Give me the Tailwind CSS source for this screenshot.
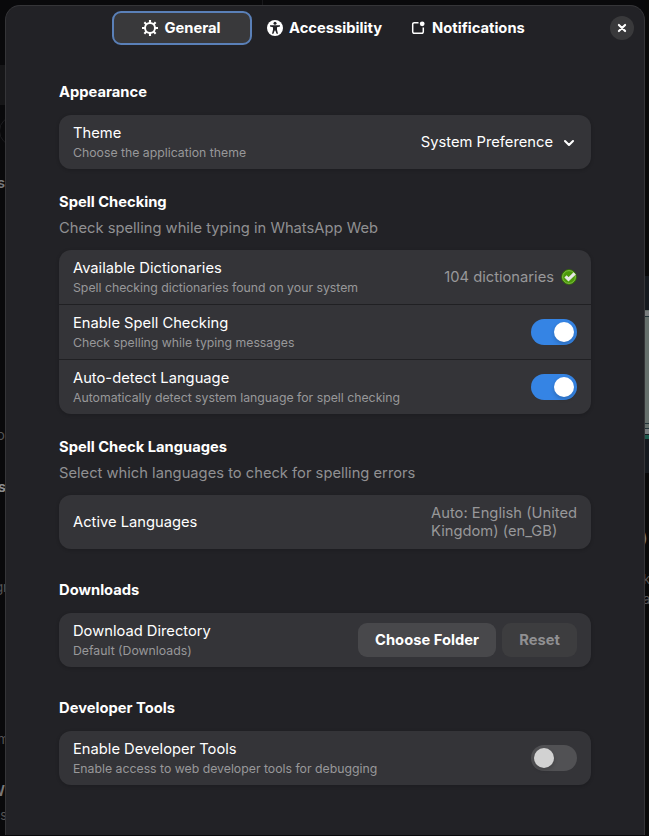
<!DOCTYPE html>
<html lang="en">
<head>
<meta charset="utf-8">
<title>Preferences</title>
<script src="https://cdn.jsdelivr.net/npm/@tailwindcss/browser@4"></script>
</head>
<body class="relative h-[836px] w-[649px] overflow-hidden bg-[#09090b] font-['Inter',sans-serif] text-[14.72px] leading-[18px] text-white antialiased">
<!-- dimmed window behind the dialog -->
<div class="absolute inset-0 overflow-hidden text-[#555557]" aria-hidden="true">
  <div class="absolute left-0 top-[65px] h-10 w-[6px] bg-[#161618]"></div>
  <div class="absolute left-[-1px] top-[116px] h-[30px] w-[30px] rounded-full border border-[#1c1c1f]"></div>
  <div class="absolute left-[262px] top-0 h-[5px] w-px bg-[#18181b]"></div>
  <div class="absolute right-[644px] top-[174px] font-semibold text-[#79797b]">s</div>
  <div class="absolute right-[644px] top-[426px] text-[14px]">o</div>
  <div class="absolute right-[643px] top-[478px] font-bold text-[#8a8a8c]">s</div>
  <div class="absolute right-[641px] top-[578px] text-[13px]">gr</div>
  <div class="absolute right-[640px] top-[730px] text-[13px]">m</div>
  <div class="absolute right-[644px] top-[782px] font-semibold text-[#79797b]">W</div>
  <div class="absolute right-[642px] top-[806px] text-[13px]">es</div>
  <div class="absolute left-[645px] top-0 h-[836px] w-1 bg-[#090909]"></div>
  <div class="absolute left-[645px] top-[276px] h-[197px] w-1 bg-[#15191e]"></div>
  <div class="absolute left-[645px] top-[310px] h-[124px] w-1 bg-[#66706c]"></div>
  <div class="absolute left-[645px] top-[311px] h-[5px] w-1 bg-[#7a7e7f]"></div>
  <div class="absolute left-[645px] top-[316px] h-px w-1 bg-[#223338]"></div>
  <div class="absolute left-[645px] top-[423px] h-px w-1 bg-[#223338]"></div>
  <div class="absolute left-[645px] top-[428px] h-px w-1 bg-[#223338]"></div>
  <div class="absolute left-[645px] top-[429px] h-[5px] w-1 bg-[#7a7e7f]"></div>
  <div class="absolute left-[645px] top-[435px] h-[4px] w-1 bg-[#1d5c4e]"></div>
  <div class="absolute left-[642px] top-[529px] font-semibold text-[#79797b]">)</div>
  <div class="absolute left-[643px] top-[570px] text-[13px]">ke</div>
  <div class="absolute left-[643px] top-[590px] text-[13px]">ar</div>
</div>

<main class="relative ml-[5px] mt-[5px] flow-root h-[830px] w-[640px] rounded-t-[15px] border border-b-0 border-[#353538] bg-[#222226]">
  <header class="flex h-[44px] items-center pl-[106px] pr-[10px] font-bold">
    <button class="-mt-px flex h-[34px] w-[140px] items-center justify-center gap-[6px] rounded-[9px] border-2 border-[#5a80b8] bg-[#39393b] pr-px">
      <svg class="h-4 w-4" viewBox="0 0 16 16" fill="none" stroke="white"><circle cx="8" cy="8" r="5" stroke-width="2"/><g stroke-width="2.1"><path d="M8 0v3M8 13v3M0 8h3M13 8h3M2.35 2.35l2.1 2.1M11.55 11.55l2.1 2.1M2.35 13.65l2.1-2.1M11.55 4.45l2.1-2.1"/></g></svg>
      <span>General</span>
    </button>
    <button class="ml-[15px] flex items-center gap-[6px]">
      <svg class="h-4 w-4" viewBox="0 0 16 16"><circle cx="8" cy="8" r="8" fill="white"/><circle cx="8" cy="3.3" r="1.5" fill="#222226"/><path d="M3 5.2h10v1.3l-3 .8v2.5l1 4h-1.4L8.3 10.5h-.6L6.4 13.8H5l1-4V7.3l-3-.8z" fill="#222226"/></svg>
      <span>Accessibility</span>
    </button>
    <button class="ml-[28px] flex items-center gap-[6px]">
      <svg class="h-4 w-4" viewBox="0 0 16 16"><path d="M8.5 2.7H4.2A1.5 1.5 0 0 0 2.7 4.2v7.6a1.5 1.5 0 0 0 1.5 1.5h7.6a1.5 1.5 0 0 0 1.5-1.5V7.5" fill="none" stroke="white" stroke-width="1.5"/><circle cx="12.2" cy="3.8" r="2.4" fill="white"/></svg>
      <span>Notifications</span>
    </button>
    <button class="ml-auto flex h-6 w-6 items-center justify-center rounded-full bg-[#39393b]" aria-label="Close">
      <svg class="h-4 w-4" viewBox="0 0 16 16"><path d="M4.9 4.9l6.2 6.2M11.1 4.9l-6.2 6.2" stroke="white" stroke-width="2.1" stroke-linecap="round"/></svg>
    </button>
  </header>

  <div class="mx-[53px] pt-[33px]">
    <section>
      <h2 class="font-bold">Appearance</h2>
      <div class="mt-[14px] flex h-[54px] items-center justify-between rounded-xl bg-[#343438] px-[14px] shadow-[0_1px_3px_1px_#0000001f]">
        <div><p>Theme</p><p class="mt-[3px] text-[12.27px] leading-[16px] text-[#98989a]">Choose the application theme</p></div>
        <div class="flex items-center gap-[8px]"><span>System Preference</span>
          <svg class="h-4 w-4" viewBox="0 0 16 16"><path d="M4 7l4 4 4-4" fill="none" stroke="white" stroke-width="2.1" stroke-linecap="round" stroke-linejoin="round"/></svg></div>
      </div>
    </section>

    <section class="mt-[24px]">
      <h2 class="font-bold">Spell Checking</h2>
      <p class="mt-[8px] text-[#909092]">Check spelling while typing in WhatsApp Web</p>
      <div class="mt-[13px] divide-y divide-[#202023] rounded-xl bg-[#343438] shadow-[0_1px_3px_1px_#0000001f]">
        <div class="flex h-[55px] items-center justify-between px-[14px]">
          <div><p>Available Dictionaries</p><p class="mt-[3px] text-[12.27px] leading-[16px] text-[#98989a]">Spell checking dictionaries found on your system</p></div>
          <div class="flex items-center gap-[7px] text-[#98989a]"><span>104 dictionaries</span>
            <svg class="h-4 w-4" viewBox="0 0 16 16"><circle cx="8" cy="8" r="7.3" fill="#4c9a0b" stroke="#387405"/><circle cx="8" cy="8" r="6.4" fill="none" stroke="#8cc653" stroke-width=".8"/><path d="M4.5 7.3l3 3 6.2-6" fill="none" stroke="#e6e6e6" stroke-width="3.2"/></svg></div>
        </div>
        <div class="flex h-[55px] items-center justify-between px-[14px]">
          <div><p>Enable Spell Checking</p><p class="mt-[3px] text-[12.27px] leading-[16px] text-[#98989a]">Check spelling while typing messages</p></div>
          <div class="flex h-[26px] w-[46px] justify-end rounded-full bg-[#3584e4] p-[3px]"><span class="h-5 w-5 rounded-full bg-white shadow-[0_2px_4px_#00000033]"></span></div>
        </div>
        <div class="flex h-[54px] items-center justify-between px-[14px]">
          <div><p>Auto-detect Language</p><p class="mt-[3px] text-[12.27px] leading-[16px] text-[#98989a]">Automatically detect system language for spell checking</p></div>
          <div class="flex h-[26px] w-[46px] justify-end rounded-full bg-[#3584e4] p-[3px]"><span class="h-5 w-5 rounded-full bg-white shadow-[0_2px_4px_#00000033]"></span></div>
        </div>
      </div>
    </section>

    <section class="mt-[24px]">
      <h2 class="font-bold">Spell Check Languages</h2>
      <p class="mt-[8px] text-[#909092]">Select which languages to check for spelling errors</p>
      <div class="mt-[13px] flex h-[54px] items-center justify-between rounded-xl bg-[#343438] px-[14px] shadow-[0_1px_3px_1px_#0000001f]">
        <p>Active Languages</p>
        <p class="whitespace-nowrap text-[#98989a]">Auto: English (United<br>Kingdom) (en_GB)</p>
      </div>
    </section>

    <section class="mt-[32px]">
      <h2 class="font-bold">Downloads</h2>
      <div class="mt-[14px] flex h-[54px] items-center justify-between rounded-xl bg-[#343438] px-[14px] shadow-[0_1px_3px_1px_#0000001f]">
        <div><p>Download Directory</p><p class="mt-[3px] text-[12.27px] leading-[16px] text-[#98989a]">Default (Downloads)</p></div>
        <div class="flex gap-[6px] font-bold">
          <button class="h-[34px] w-[138px] rounded-[9px] bg-[#48484b]">Choose Folder</button>
          <button class="h-[34px] w-[75px] rounded-[9px] bg-[#3d3d3f] text-[#909092]">Reset</button>
        </div>
      </div>
    </section>

    <section class="mt-[32px]">
      <h2 class="font-bold">Developer Tools</h2>
      <div class="mt-[14px] flex h-[54px] items-center justify-between rounded-xl bg-[#343438] px-[14px] shadow-[0_1px_3px_1px_#0000001f]">
        <div><p>Enable Developer Tools</p><p class="mt-[3px] text-[12.27px] leading-[16px] text-[#98989a]">Enable access to web developer tools for debugging</p></div>
        <div class="flex h-[26px] w-[46px] rounded-full bg-[#515154] p-[3px]"><span class="h-5 w-5 rounded-full bg-[#d2d2d2] shadow-[0_2px_4px_#00000033]"></span></div>
      </div>
    </section>
  </div>
</main>
</body>
</html>
